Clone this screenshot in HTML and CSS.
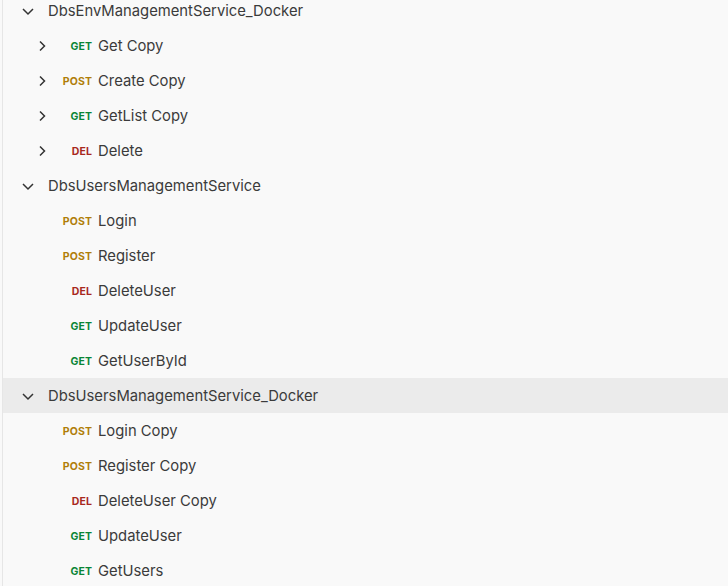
FILE: index.html
```html
<!DOCTYPE html>
<html>
<head>
<meta charset="utf-8">
<link rel="stylesheet" href="styles.css">
</head>
<body>
<div class="tree">
  <div class="row folder">
    <span class="chev"><svg viewBox="0 0 16 16" width="16" height="16"><path d="M3 6 8 11 13 6" fill="none" stroke="#333" stroke-width="1.5"/></svg></span>
    <span class="name">DbsEnvManagementService_Docker</span>
  </div>
  <div class="row req">
    <span class="chev"><svg viewBox="0 0 16 16" width="16" height="16"><path d="M6 3.5 10.5 8 6 12.5" fill="none" stroke="#333" stroke-width="1.5"/></svg></span>
    <span class="method get">GET</span><span class="name">Get Copy</span>
  </div>
  <div class="row req">
    <span class="chev"><svg viewBox="0 0 16 16" width="16" height="16"><path d="M6 3.5 10.5 8 6 12.5" fill="none" stroke="#333" stroke-width="1.5"/></svg></span>
    <span class="method post">POST</span><span class="name">Create Copy</span>
  </div>
  <div class="row req">
    <span class="chev"><svg viewBox="0 0 16 16" width="16" height="16"><path d="M6 3.5 10.5 8 6 12.5" fill="none" stroke="#333" stroke-width="1.5"/></svg></span>
    <span class="method get">GET</span><span class="name">GetList Copy</span>
  </div>
  <div class="row req">
    <span class="chev"><svg viewBox="0 0 16 16" width="16" height="16"><path d="M6 3.5 10.5 8 6 12.5" fill="none" stroke="#333" stroke-width="1.5"/></svg></span>
    <span class="method del">DEL</span><span class="name">Delete</span>
  </div>
  <div class="row folder">
    <span class="chev"><svg viewBox="0 0 16 16" width="16" height="16"><path d="M3 6 8 11 13 6" fill="none" stroke="#333" stroke-width="1.5"/></svg></span>
    <span class="name">DbsUsersManagementService</span>
  </div>
  <div class="row req">
    <span class="chev"></span>
    <span class="method post">POST</span><span class="name">Login</span>
  </div>
  <div class="row req">
    <span class="chev"></span>
    <span class="method post">POST</span><span class="name">Register</span>
  </div>
  <div class="row req">
    <span class="chev"></span>
    <span class="method del">DEL</span><span class="name">DeleteUser</span>
  </div>
  <div class="row req">
    <span class="chev"></span>
    <span class="method get">GET</span><span class="name">UpdateUser</span>
  </div>
  <div class="row req">
    <span class="chev"></span>
    <span class="method get">GET</span><span class="name">GetUserById</span>
  </div>
  <div class="row folder hover">
    <span class="chev"><svg viewBox="0 0 16 16" width="16" height="16"><path d="M3 6 8 11 13 6" fill="none" stroke="#333" stroke-width="1.5"/></svg></span>
    <span class="name">DbsUsersManagementService_Docker</span>
  </div>
  <div class="row req">
    <span class="chev"></span>
    <span class="method post">POST</span><span class="name">Login Copy</span>
  </div>
  <div class="row req">
    <span class="chev"></span>
    <span class="method post">POST</span><span class="name">Register Copy</span>
  </div>
  <div class="row req">
    <span class="chev"></span>
    <span class="method del">DEL</span><span class="name">DeleteUser Copy</span>
  </div>
  <div class="row req">
    <span class="chev"></span>
    <span class="method get">GET</span><span class="name">UpdateUser</span>
  </div>
  <div class="row req">
    <span class="chev"></span>
    <span class="method get">GET</span><span class="name">GetUsers</span>
  </div>
</div>
</body>
</html>
```
FILE: styles.css
```css
html, body {
  margin: 0;
  padding: 0;
  background: #f9f9f9;
  overflow: hidden;
}
body {
  font-family: Inter, "Noto Sans", sans-serif;
  color: #3b3b3b;
}
.tree {
  margin-left: 2px;
  margin-top: -7px;
  border-left: 1px solid #e6e6e6;
  height: 620px;
}
.row {
  display: flex;
  align-items: center;
  height: 35px;
  font-size: 14.8px;
}
.row.hover {
  background: #ebebeb;
}
.chev {
  width: 16px;
  height: 16px;
  flex: none;
  display: flex;
}
.folder {
  padding-left: 17px;
}
.folder .name {
  margin-left: 12px;
}
.req {
  padding-left: 31px;
}
.method {
  width: 42px;
  flex: none;
  text-align: right;
  font-size: 10.5px;
  font-weight: 700;
  letter-spacing: 0.1px;
  margin-right: 6px;
  padding-top: 1px;
}
.get { color: #0a8536; }
.post { color: #b07e0a; }
.del { color: #a8281e; }
```
